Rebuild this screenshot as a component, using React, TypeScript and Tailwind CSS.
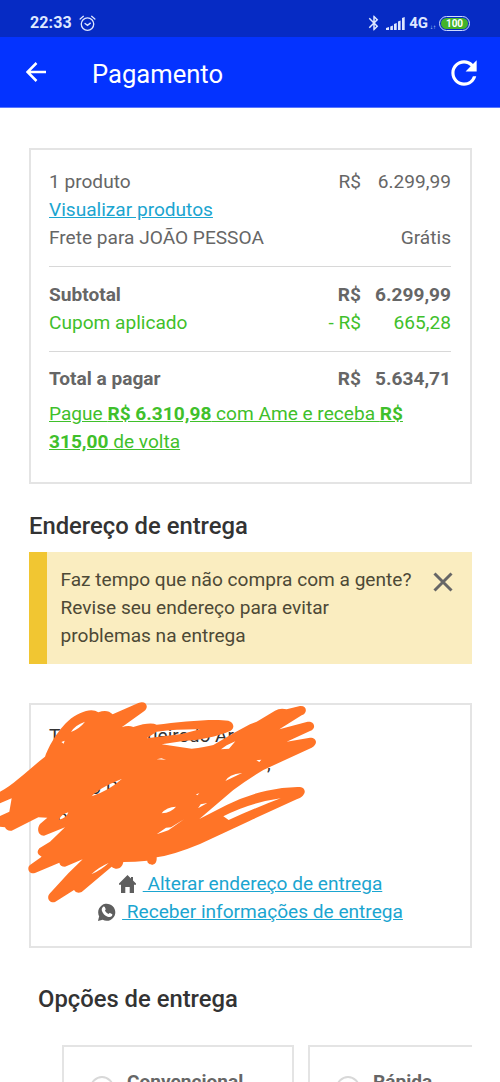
import React from 'react';
import { MdRefresh, MdBluetooth } from 'react-icons/md';

const StatusBar: React.FC = () => (
  <div className="h-[37px] bg-[#062bc4] flex items-center justify-between pl-[30px] pr-[30px] pt-[9px] text-[#dfe8ff]">
    <div className="flex items-center gap-[7px]">
      <span className="text-[16px] leading-none font-bold tracking-[0.1px]">22:33</span>
      <svg className="w-[17px] h-[17px]" viewBox="0 0 18 18" fill="none" stroke="currentColor" strokeWidth="1.4" strokeLinecap="round">
        <circle cx="9" cy="9.6" r="6.6" />
        <path d="M1.2 4.2 4.6 1.4M16.8 4.2 13.4 1.4M6.4 9l2.6 2 3-2.4" />
      </svg>
    </div>
    <div className="flex items-center">
      <MdBluetooth className="w-[18px] h-[18px]" />
      <svg className="w-[19px] h-[13px] ml-[3px]" viewBox="0 0 19 13" fill="currentColor">
        <path d="M0 13v-2l3-1v3zM4.3 13V9.5l2.6-1V13zM8 13V7l2.7-1v7zM12 13V4.5l2.6-1V13zM16 13V1L18.7 0v13z" />
      </svg>
      <span className="ml-1 text-[15px] leading-none font-bold">4G</span>
      <span className="ml-[2px] mt-[7px] text-[6px] leading-none">↓↑</span>
      <span className="ml-[3px] w-[31px] h-[15px] rounded-full border-[1.5px] border-[#cfdcff] p-px flex">
        <span className="flex-1 rounded-full bg-[#43b32b] text-[10px] font-bold leading-[11px] text-center text-white">100</span>
      </span>
    </div>
  </div>
);

const SummaryRow = ({ label, currency, value }: { label: string; currency?: string; value: string }) => (
  <div className="flex">
    <span className="flex-1">{label}</span>
    <span>{currency}</span>
    <span className="w-[90px] text-right">{value}</span>
  </div>
);

const Scribble: React.FC = () => (
  <svg className="absolute -left-[31px] -top-[15px] w-[320px] h-[220px]" viewBox="0 0 960 660" fill="#ff7427" fillRule="evenodd">
    <path
      d="M0 305C40 285 90 235 135 200C150 160 190 90 240 70Q275 53 295 67Q322 56 338 73L415 39C440 30 448 53 432 64L365 112Q385 105 400 111Q450 95 470 104C540 95 640 85 685 92C702 97 705 114 692 122C650 140 600 150 550 153L485 163L575 176Q615 172 640 165L700 130L750 103L770 95L825 62Q840 53 860 58L900 48C922 46 923 70 905 76L838 118L920 96C945 90 950 118 930 123L860 155L930 143C953 143 953 165 935 173L790 240Q740 270 700 300L598 387L680 345Q740 315 800 302Q850 290 900 291C920 294 921 317 890 328Q820 360 750 392L600 462Q520 495 470 502C472 535 440 525 442 512Q405 516 370 516C366 536 350 542 335 530L245 606Q230 613 222 600L165 636C147 640 138 622 150 610L205 550L248 508L195 530Q180 530 178 518L105 549C85 555 80 532 90 525L125 500Q105 490 118 475L150 455L195 412L132 437C113 437 110 415 120 402L142 383L115 382L35 422Q20 424 15 412L0 410V378L28 365L35 325L0 340Z
      M213 126Q225 105 255 95Q240 115 213 126ZM184 156L194 152L191 161ZM440 145L470 125Q540 117 600 118L545 132ZM470 208L484 205L498 209ZM275 319Q295 295 365 267Q330 300 275 319ZM177 389Q184 373 205 367Q200 384 177 389ZM485 370Q500 350 528 350Q515 367 485 370ZM470 433L498 413L513 412L552 388L505 421ZM594 355L602 343L622 339ZM588 313L598 310L592 316ZM676 273Q685 254 726 249ZM663 178L680 166L706 154L687 176ZM670 379Q750 338 842 325Q770 352 686 390ZM769 211L784 209L778 216ZM274 553Q295 532 326 519Q305 539 274 553Z"
    />
  </svg>
);

const HomeIcon: React.FC = () => (
  <svg className="w-[17px] h-[18px]" viewBox="0 0 17 18" fill="#5e5e5e">
    <path d="M8.5 0 12 3.4V2h2v3.4L17 8.5v1.2h-2V18h-4.300v-6H6.300v6H2V9.700H0V8.500z" />
  </svg>
);

const WhatsappIcon: React.FC = () => (
  <svg className="w-[19px] h-[19px]" viewBox="0 0 20 20">
    <path fill="#5e5e5e" d="M1 19l1.300-5A9 9 0 1 1 6 17.700z" />
    <path fill="white" d="M6.300 4.200c.7-.7 1.500-.6 1.900.1l.9 2c.2.500-.2 1-.8 1.700.8 1.700 2 2.900 3.800 3.700.8-1 1.200-1.300 1.600-1.100l2 1c.7.4.5 1.300 0 2-1 1.300-2.700 1.500-4.500.8-3-1.100-5-3.200-6-6-.5-1.700-.1-3.100 1.100-4.200z" />
  </svg>
);

const DeliveryOption = ({ name, className }: { name: string; className: string }) => (
  <div className={`h-[120px] shrink-0 border-2 border-[#e4e4e4] flex pl-[26px] pt-[21px] ${className}`}>
    <span className="mt-2 w-6 h-6 rounded-full border-2 border-[#d8d8d8]" />
    <span className="ml-[13px] leading-[28px] font-bold text-[#666]">{name}</span>
  </div>
);

const App: React.FC = () => {
  return (
    <div className="w-[500px] h-[1082px] overflow-hidden bg-white font-['Roboto',sans-serif] text-[19.1px] leading-[28.2px] text-[#666]">
      <StatusBar />
      <header className="h-[71px] bg-[#0433ff] border-b border-[#5a78ff] flex items-center pl-[26px] pr-[17px] text-white">
        <svg className="w-5 h-5" viewBox="0 0 20 20" fill="none" stroke="currentColor" strokeWidth="2.5">
          <path d="M20 10H2M10.500 1 1.500 10l9 9" />
        </svg>
        <h1 className="ml-[46px] mt-[3px] flex-1 text-[25.600px] leading-8">Pagamento</h1>
        <MdRefresh className="w-[38px] h-[38px] mt-px" />
      </header>

      <main className="pl-[29px] pr-7 pt-10">
        {/* Resumo do pedido */}
        <section className="h-[336px] border-2 border-[#e4e4e4] pl-[18px] pr-[19px] pt-[17.5px]">
          <SummaryRow label="1 produto" currency="R$" value="6.299,99" />
          <a className="block text-[#1ba5d0] underline">Visualizar produtos</a>
          <SummaryRow label="Frete para JOÃO PESSOA" value="Grátis" />
          <hr className="mt-[14px] mb-[13.7px] border-t-[1.5px] border-[#d8d8d8]" />
          <div className="font-bold">
            <SummaryRow label="Subtotal" currency="R$" value="6.299,99" />
          </div>
          <div className="text-[#3fc02b]">
            <SummaryRow label="Cupom aplicado" currency="- R$" value="665,28" />
          </div>
          <hr className="mt-[13.8px] mb-[12.5px] border-t-[1.5px] border-[#d8d8d8]" />
          <div className="font-bold">
            <SummaryRow label="Total a pagar" currency="R$" value="5.634,71" />
          </div>
          <a className="mt-[7px] block w-[370px] text-[#3fc02b] underline">
            Pague <b>R$ 6.310,98</b> com Ame e receba <b>R$ 315,00</b> de volta
          </a>
        </section>

        <h2 className="mt-[26px] text-[23.8px] leading-8 font-medium text-[#333]">Endereço de entrega</h2>
        <div className="mt-[10px] h-[112px] flex bg-[#faedc0] border-l-[18px] border-[#f1c632] pl-[13.5px] pt-[14px] text-[#4d4936]">
          <p className="w-[372.5px]">
            Faz tempo que não compra com a gente?
            <br />
            Revise seu endereço para evitar
            <br />
            problemas na entrega
          </p>
          <svg className="mt-[6px] w-[20px] h-[20px]" viewBox="0 0 20 20" stroke="#666" strokeWidth="3">
            <path d="M1.500 1.500l17 17M18.500 1.500l-17 17" />
          </svg>
        </div>

        {/* Endereço */}
        <section className="relative mt-[39px] h-[245px] border-2 border-[#e4e4e4] px-[18px] pt-[17px]">
          <div className="h-[148px] text-[#333]">
            <p className="flex">
              <span className="w-[98px]">T</span>
              <span>ueiredo Ar</span>
            </p>
            <p className="pl-[218px]">,</p>
            <p className="pl-[41px] -mt-1">o P</p>
            <p className="pl-2">o</p>
          </div>
          <Scribble />
          <a className="flex items-center justify-center text-[#1ba5d0]">
            <HomeIcon />
            <span className="ml-[7px] whitespace-pre underline"> Alterar endereço de entrega</span>
          </a>
          <a className="flex items-center justify-center -ml-px text-[#1ba5d0]">
            <WhatsappIcon />
            <span className="ml-1.5 whitespace-pre underline"> Receber informações de entrega</span>
          </a>
        </section>

        <h2 className="mt-[35px] ml-[9px] text-[23.8px] leading-8 font-medium text-[#333]">Opções de entrega</h2>
        <div className="mt-[30px] ml-[33px] flex gap-[14px] overflow-hidden">
          <DeliveryOption name="Convencional" className="w-[232px]" />
          <DeliveryOption name="Rápida" className="w-[232px]" />
        </div>
      </main>
    </div>
  );
};

export default App;
